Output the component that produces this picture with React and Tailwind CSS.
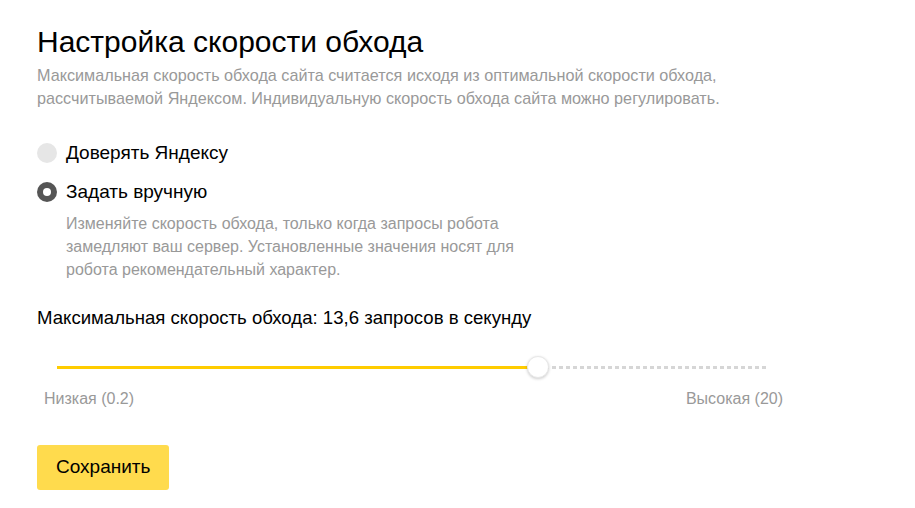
import { useState } from "react";

function Radio({ checked, label, onClick }) {
  return (
    <button onClick={onClick} className="flex items-center gap-[9px] text-left">
      {checked ? (
        <span className="w-[20px] h-[20px] rounded-full bg-[#555] flex items-center justify-center">
          <span className="w-[8px] h-[8px] rounded-full bg-white" />
        </span>
      ) : (
        <span className="w-[20px] h-[20px] rounded-full bg-[#e6e6e6]" />
      )}
      <span className="text-[19px] leading-[24px] text-black">{label}</span>
    </button>
  );
}

export default function App() {
  let [mode, setMode] = useState("manual");
  let value = 13.6;
  let pct = ((value - 0.2) / 19.8) * 100;

  return (
    <div
      className="min-h-screen bg-white px-[37px] pt-[26px]"
      style={{ fontFamily: '"Liberation Sans", Arial, sans-serif' }}
    >
      <h1 className="text-[30px] leading-[32px] text-black font-normal">
        Настройка скорости обхода
      </h1>
      <p className="mt-[6px] text-[16.2px] leading-[23px] text-[#999]">
        Максимальная скорость обхода сайта считается исходя из оптимальной скорости обхода,
        <br />
        рассчитываемой Яндексом. Индивидуальную скорость обхода сайта можно регулировать.
      </p>

      <div className="mt-[31px] flex flex-col gap-[15px]">
        <Radio checked={mode === "auto"} label="Доверять Яндексу" onClick={() => setMode("auto")} />
        <Radio checked={mode === "manual"} label="Задать вручную" onClick={() => setMode("manual")} />
      </div>
      <p className="mt-[8px] ml-[29px] text-[16px] leading-[23px] text-[#999]">
        Изменяйте скорость обхода, только когда запросы робота
        <br />
        замедляют ваш сервер. Установленные значения носят для
        <br />
        робота рекомендательный характер.
      </p>

      <div className="mt-[25px] text-[18.6px] leading-[24px] text-black">
        Максимальная скорость обхода: 13,6 запросов в секунду
      </div>

      <div className="relative mt-[26px] ml-[20px] w-[710px] h-[22px]">
        <div
          className="absolute top-[10px] left-0 h-[3px] bg-[#fc0]"
          style={{ width: pct + "%" }}
        />
        <div
          className="absolute top-[10px] right-0 h-[3px] bg-[repeating-linear-gradient(90deg,#d6d6d6_0_4px,transparent_4px_7px)]"
          style={{ left: pct + "%" }}
        />
        <div
          className="absolute top-0 w-[22px] h-[22px] -ml-[11px] rounded-full bg-white border border-[#e8e8e8] shadow-[0_1px_3px_rgba(0,0,0,0.2)]"
          style={{ left: pct + "%" }}
        />
      </div>

      <div className="mt-[11px] ml-[7px] w-[739px] flex justify-between text-[16px] leading-[20px] text-[#999]">
        <span>Низкая (0.2)</span>
        <span>Высокая (20)</span>
      </div>

      <button className="mt-[36px] h-[45px] px-[19px] rounded-[3px] bg-[#ffdb4d] text-[19px] text-black">
        Сохранить
      </button>
    </div>
  );
}
